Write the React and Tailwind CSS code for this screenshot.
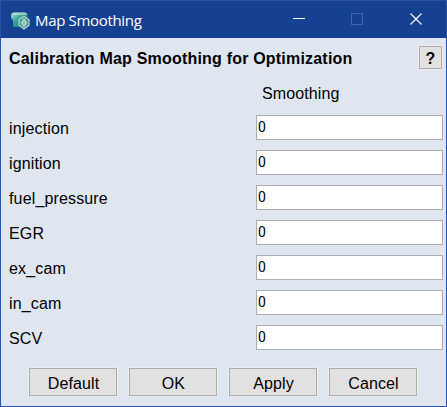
const FIELDS = ['injection', 'ignition', 'fuel_pressure', 'EGR', 'ex_cam', 'in_cam', 'SCV'];
const ACTIONS = ['Default', 'OK', 'Apply', 'Cancel'];

function AppIcon() {
  return (
    <svg className="ml-[10px] mt-[2px] shrink-0" width="19" height="18" viewBox="0 0 19 18">
      <defs>
        <linearGradient id="mapFill" x1="0" y1="0" x2="1" y2="1">
          <stop offset="0" stopColor="#b5e2da" />
          <stop offset="0.4" stopColor="#3fa899" />
          <stop offset="1" stopColor="#087969" />
        </linearGradient>
      </defs>
      <path d="M3 .5H14Q16.500 .5 16.500 3V12Q16.500 15 14 15H4Q2 15 2 13V8Q0 7 0 5V4Q0 .5 3 .5Z" fill="url(#mapFill)" />
      <path d="M1 3Q1 .5 3 .5H14Q16 .5 16 3Z" fill="#b8ddd7" opacity=".7" />
      <path d="M13 4.500L18 7.500V13.500L13 17L8 13.500V7.500Z" fill="#4f9b93" stroke="#b5dbd4" strokeWidth="1.1" />
      <path d="M13 7L15.500 10.700L13 14.500L10.500 10.700Z" fill="#4d9d92" stroke="#e3f4f0" strokeWidth="1" />
      <path d="M13 9V13M11 10.700H15" stroke="#c5e4dd" strokeWidth=".7" />
    </svg>
  );
}

function WindowControls() {
  return (
    <div className="ml-auto flex items-center">
      <svg width="154" height="37" viewBox="0 0 154 37" fill="none" shapeRendering="crispEdges">
        <path d="M1 17.5h12" stroke="#fff" />
        <rect x="59.5" y="12.5" width="11" height="11" stroke="#4668a9" />
        <path d="M118.5 12.5l11 11M129.5 12.5l-11 11" stroke="#fff" strokeWidth="1.1" shapeRendering="geometricPrecision" />
      </svg>
    </div>
  );
}

export default function App() {
  return (
    <div className="flex h-[407px] w-[447px] flex-col border border-[#2854a3] bg-[#dfe6f0] font-['Liberation_Sans',Arial,sans-serif] text-[16px] text-black">
      <header className="flex h-[37px] shrink-0 items-center bg-[#164193] text-white">
        <AppIcon />
        <span className="ml-[5px] whitespace-nowrap font-['Open_Sans',sans-serif] text-[15px] leading-5 tracking-[-0.33px]">Map Smoothing</span>
        <WindowControls />
      </header>
      <main className="flex flex-1 flex-col">
        <div className="flex h-[38px] shrink-0 items-center justify-between pl-2 pr-[3px]">
          <h1 className="mt-[3px] whitespace-nowrap text-[16px] font-bold leading-5 tracking-[0.2px]">Calibration Map Smoothing for Optimization</h1>
          <button className="mt-px flex h-[25px] w-[25px] items-center justify-center border border-[#ececec] text-[16px] font-bold">
            <span className="flex h-[23px] w-[23px] items-center justify-center border border-[#adadad] bg-[#e1e1e1] pt-[3px]">?</span>
          </button>
        </div>
        <div className="h-[39px] shrink-0 pl-[261px] pt-2 leading-5 tracking-[0.1px]">Smoothing</div>
        <div className="flex flex-col gap-[10px] pl-2 pr-[3px]">
          {FIELDS.map((name) => (
            <label key={name} className="flex h-[25px] items-center justify-between">
              <span className="mt-[3px] leading-5 tracking-[0.15px]">{name}</span>
              <input defaultValue="0" className="h-[25px] w-[187px] border border-[#abadb3] bg-white pb-px pl-[1px] font-['Roboto',sans-serif] text-[14px] outline-none" />
            </label>
          ))}
        </div>
        <div className="mt-[17px] flex gap-[10px] pl-[27px]">
          {ACTIONS.map((name) => (
            <button key={name} className="h-[30px] w-[90px] border border-[#ececec]">
              <span className="flex h-[28px] items-center justify-center border border-[#adadad] bg-[#e1e1e1] pl-px pt-[3px] leading-5 tracking-[0.1px]">{name}</span>
            </button>
          ))}
        </div>
      </main>
    </div>
  );
}
